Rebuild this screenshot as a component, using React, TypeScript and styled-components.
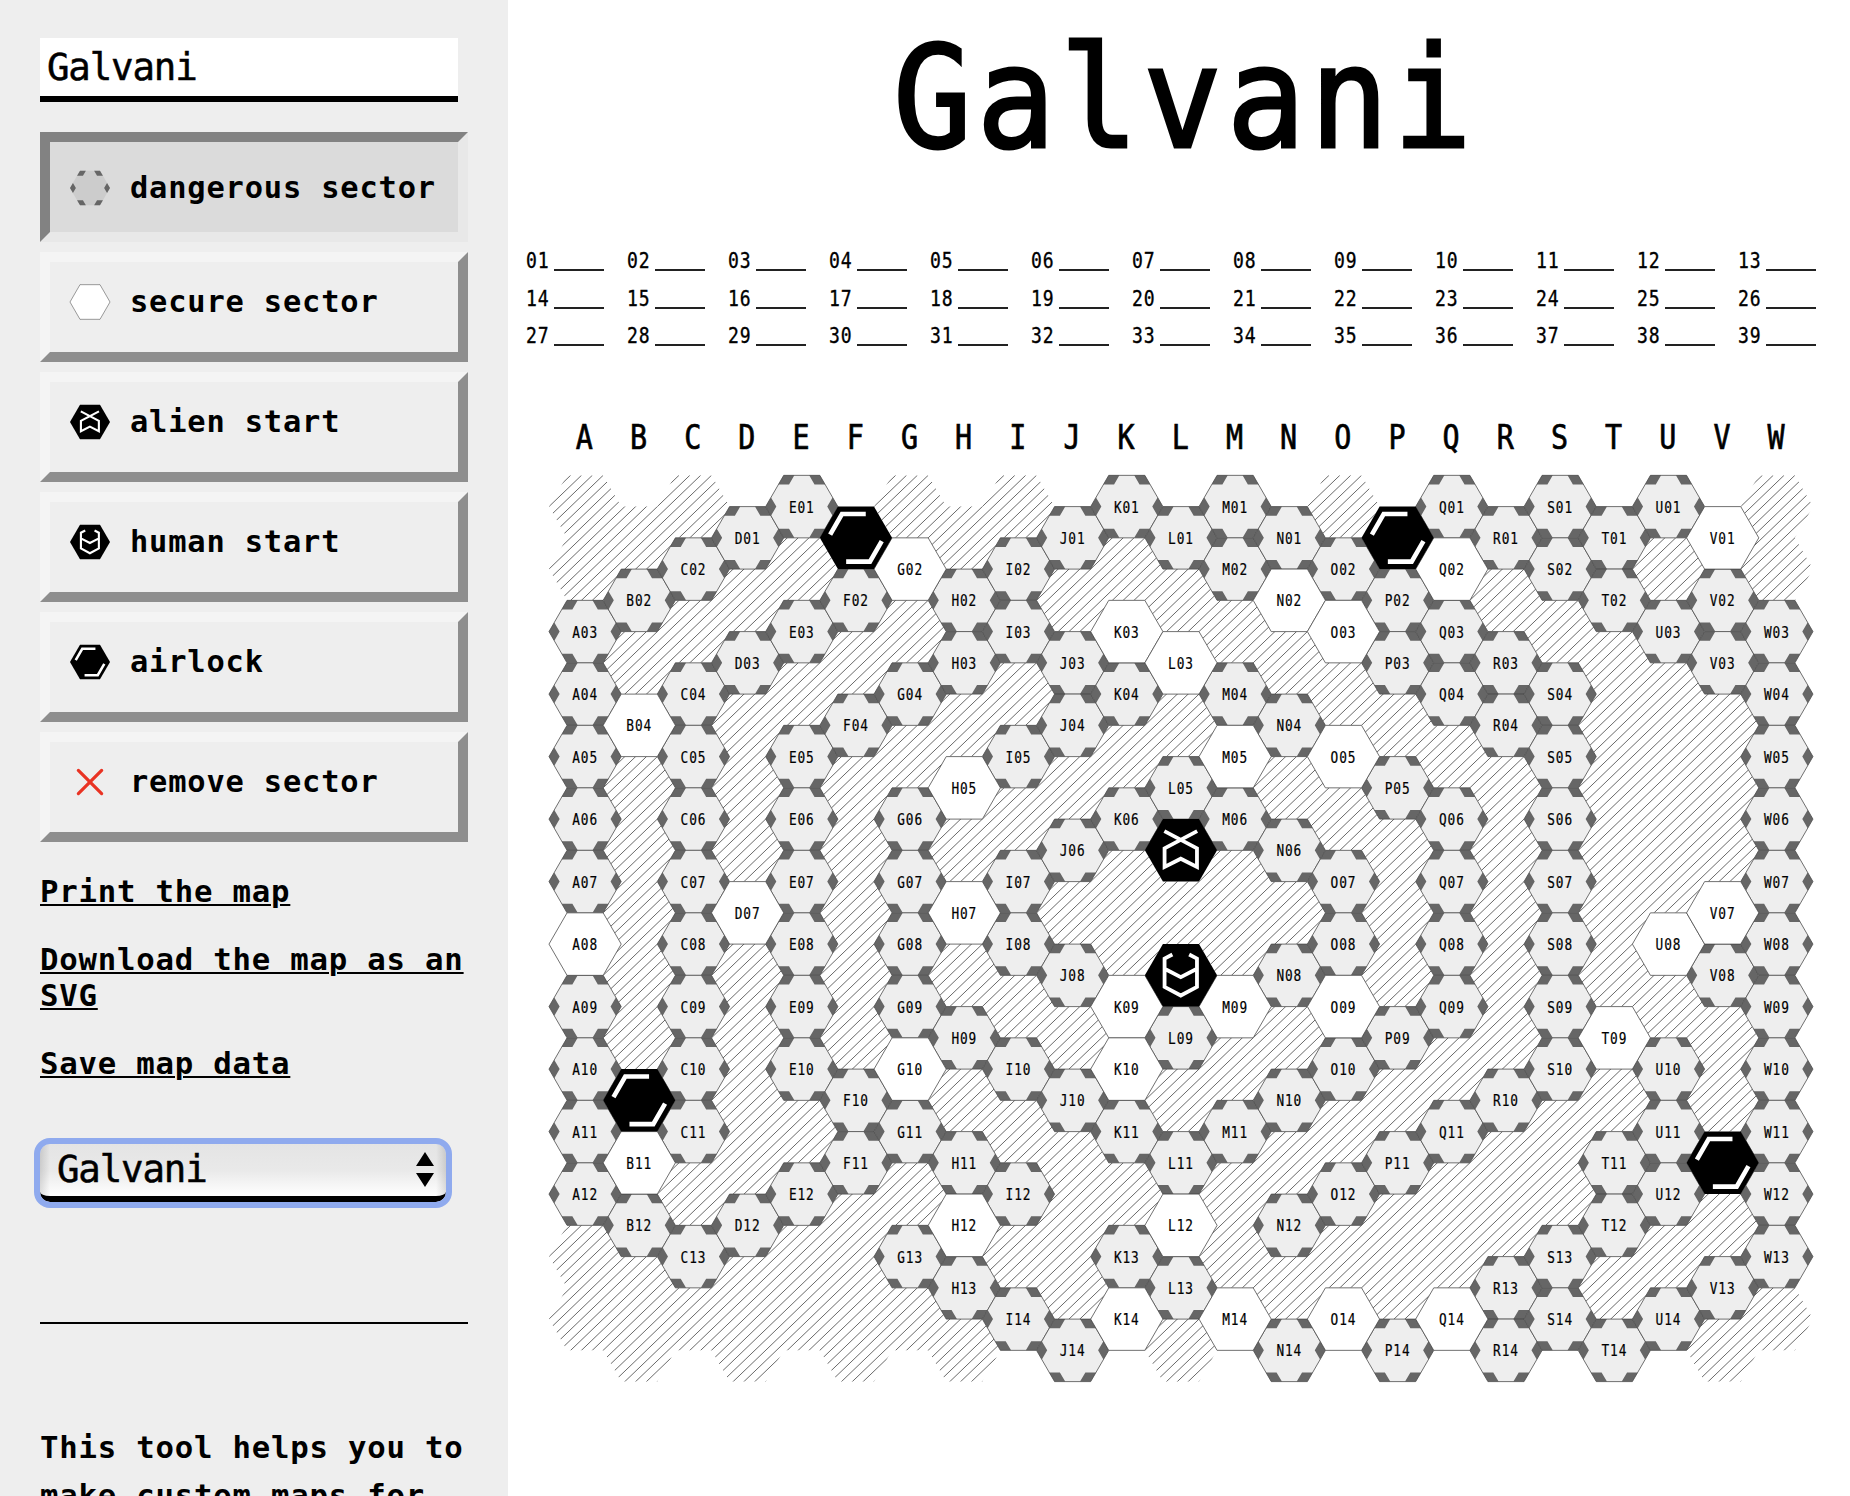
import React from "react";
import styled, { createGlobalStyle } from "styled-components";

const MONO = `"DejaVu Sans Mono", "Liberation Mono", monospace`;

const GlobalStyle = createGlobalStyle`
  body { margin: 0; background: #fff; color: #000; font-family: ${MONO}; }
  * { box-sizing: border-box; }
`;

const COL = 54.17;
const ROW = 62.5;
const R = COL / 1.5;
const H = ROW / 2;
const LETTERS = "ABCDEFGHIJKLMNOPQRSTUVW".split("");

// Rows occupied by each kind of sector, per column.
const DANGEROUS: Record<string, number[]> = {
  A: [3, 4, 5, 6, 7, 9, 10, 11, 12], B: [2, 12], C: [2, 4, 5, 6, 7, 8, 9, 10, 11, 13],
  D: [1, 3, 12], E: [1, 3, 5, 6, 7, 8, 9, 10, 12], F: [2, 4, 10, 11],
  G: [4, 6, 7, 8, 9, 11, 13], H: [2, 3, 9, 11, 13], I: [2, 3, 5, 7, 8, 10, 12, 14],
  J: [1, 3, 4, 6, 8, 10, 14], K: [1, 4, 6, 11, 13], L: [1, 5, 9, 11, 13],
  M: [1, 2, 4, 6, 11], N: [1, 4, 6, 8, 10, 12, 14], O: [2, 7, 8, 10, 12],
  P: [2, 3, 5, 9, 11, 14], Q: [1, 3, 4, 6, 7, 8, 9, 11], R: [1, 3, 4, 10, 13, 14],
  S: [1, 2, 4, 5, 6, 7, 8, 9, 10, 13, 14], T: [1, 2, 11, 12, 14], U: [1, 3, 10, 11, 12, 14],
  V: [2, 3, 8, 13], W: [3, 4, 5, 6, 7, 8, 9, 10, 11, 12, 13],
};
const SECURE: Record<string, number[]> = {
  A: [8], B: [4, 11], D: [7], G: [2, 10], H: [5, 7, 12], K: [3, 9, 10, 14], L: [3, 12],
  M: [5, 9, 14], N: [2], O: [3, 5, 9, 14], Q: [2, 14], T: [9], U: [8], V: [1, 7],
};
const SPECIAL: Record<string, Kind> = {
  F1: "airlock", P1: "airlock", B10: "airlock", V11: "airlock", L6: "alien", L8: "human",
};

type Kind = "dangerous" | "secure" | "alien" | "human" | "airlock" | "remove" | "empty";

const kindOf = (letter: string, row: number): Kind => {
  const special = SPECIAL[letter + row];
  if (special) return special;
  if (DANGEROUS[letter]?.includes(row)) return "dangerous";
  if (SECURE[letter]?.includes(row)) return "secure";
  return "empty";
};

const VERTS: [number, number][] = [[-R, 0], [-R / 2, -H], [R / 2, -H], [R, 0], [R / 2, H], [-R / 2, H]];
const HEX = VERTS.map((v) => v.join(",")).join(" ");
const SIDE = 0.295;
const CORNERS = VERTS.map((v, i) => {
  const a = VERTS[(i + 5) % 6];
  const b = VERTS[(i + 1) % 6];
  const da = [(a[0] - v[0]) * SIDE, (a[1] - v[1]) * SIDE];
  const db = [(b[0] - v[0]) * SIDE, (b[1] - v[1]) * SIDE];
  return `M${v[0]} ${v[1]}l${da[0]} ${da[1]}l${db[0]} ${db[1]}l${-da[0]} ${-da[1]}z`;
}).join("");

// Diagonal hatching over the whole board, five lines per column step.
const HATCH = Array.from({ length: 205 }, (_, k) => {
  const x = 41 + (k * COL) / 5;
  const rows = 90;
  return `M${x} 75.3L${x - (rows * COL) / 5} ${75.3 + (rows * ROW) / 6}`;
}).join("");

const Hexagon = ({ kind, fill = "#eee", edge = 0.8 }: { kind: Kind; fill?: string; edge?: number }) => {
  if (kind === "remove")
    return <path d="M-21-21L21 21M21-21L-21 21" stroke="#e93323" strokeWidth={5.8} strokeLinecap="round" />;
  if (kind === "dangerous")
    return (
      <g>
        <polygon points={HEX} fill={fill} />
        <path d={CORNERS} fill="#666" />
        {edge > 0 && <polygon points={HEX} fill="none" stroke="#4c4c4c" strokeWidth={edge} />}
      </g>
    );
  if (kind === "secure")
    return <polygon points={HEX} fill="#fff" stroke="#4c4c4c" strokeWidth={edge || 1} />;
  return (
    <g>
      <polygon points={HEX} fill="#000" />
      <g fill="none" stroke="#fff" strokeWidth={3.8}>
        {kind === "alien" && <path d="M-16.6-19.2L16-2V16.6L-0.2 8.4L-16.4 16.6V-2L16.2-19.2" />}
        {kind === "human" && <path d="M-8.6-20.8L-16.4-16.8V11.6L-0.2 20.2L16 11.6V-16.8L8.2-20.8M-16.4-6.6L-0.2 1.8L16-6.6" />}
        {kind === "airlock" && <path strokeWidth={4.6} d="M-25.8-3.2L-14-23.8H9.8M25.8 3.2L14 23.8H-9.8" />}
      </g>
    </g>
  );
};

const Page = styled.div`
  display: grid;
  grid-template-columns: 508px 1fr;
  height: 1496px;
  overflow: hidden;
`;

const Sidebar = styled.aside`
  background: #eee;
  padding: 38px 38px 0 40px;
  overflow: hidden;
  font-size: 30.7px;
  font-weight: bold;
  letter-spacing: 0.78px;
`;

const NameInput = styled.input`
  display: block;
  width: 418px;
  height: 64px;
  margin: 0 0 30px;
  padding: 0 7px;
  border: 0;
  border-bottom: 6px solid #000;
  border-radius: 0;
  outline: 0;
  background: #fff;
  color: #000;
  font: 37.4px ${MONO};
  letter-spacing: -1.15px;
  -webkit-text-stroke: 0.5px #000;
`;

const Tools = styled.div`
  display: flex;
  flex-direction: column;
  gap: 10px;
  width: 428px;
`;

const ToolButton = styled.button<{ $pressed?: boolean }>`
  display: flex;
  align-items: flex-start;
  gap: 20px;
  height: 110px;
  padding: ${(p) => (p.$pressed ? "26px 0 0 20px" : "20px 0 0 20px")};
  border: 10px solid;
  border-color: ${(p) => (p.$pressed ? "#828282 #e8e8e8 #e8e8e8 #828282" : "#f4f4f4 #8e8e8e #8e8e8e #f4f4f4")};
  background: ${(p) => (p.$pressed ? "#dbdbdb" : "#eee")};
  color: #000;
  font: bold 30.4px/40px ${MONO};
  letter-spacing: 0.82px;
  white-space: nowrap;
`;

const ToolIcon = styled.svg`
  flex: none;
  width: 42px;
  height: 40px;
  margin: 0 -1px;
`;

const Links = styled.nav`
  display: flex;
  flex-direction: column;
  gap: 32px;
  margin-top: 32px;
  width: 430px;
`;

const MapLink = styled.a`
  color: #000;
  line-height: 36px;
  text-decoration: underline;
  text-decoration-thickness: 2px;
  text-underline-offset: 2px;
`;

const Picker = styled.div`
  display: flex;
  align-items: center;
  justify-content: space-between;
  width: 406px;
  height: 58px;
  margin-top: 62px;
  padding: 0 12px 2px 17px;
  border-bottom: 6px solid #000;
  border-radius: 10px;
  outline: 6px solid #8faaee;
  background:
    linear-gradient(90deg, rgba(0, 0, 0, 0.12), transparent 10px, transparent calc(100% - 10px), rgba(0, 0, 0, 0.12)),
    linear-gradient(#e4e4e4, #e9e9e9 50%, #fff);
  font-size: 37.4px;
  font-weight: normal;
  letter-spacing: -1.15px;
  -webkit-text-stroke: 0.5px #000;
`;

const Arrows = styled.svg`
  width: 18px;
  height: 36px;
  margin-top: 1px;
`;

const Divider = styled.hr`
  width: 428px;
  margin: 120px 0 100px;
  border: 0;
  border-top: 2px solid #000;
`;

const Intro = styled.p`
  margin: 0;
  width: 440px;
  line-height: 48px;
  white-space: pre-line;
`;

const Sheet = styled.main`
  display: flex;
  flex-direction: column;
  overflow: hidden;
`;

const Title = styled.h1`
  margin: 23px 0 0 12px;
  height: 219px;
  text-align: center;
  font: 141px/150px ${MONO};
  letter-spacing: 5.2px;
  transform: scaleX(0.925);
  -webkit-text-stroke: 3px #000;
`;

const Turns = styled.ol`
  display: grid;
  grid-template-columns: repeat(13, 101.03px);
  grid-auto-rows: 37.6px;
  margin: 1px 0 0;
  padding: 0 0 0 18px;
  list-style: none;
`;

const Turn = styled.li`
  display: flex;
  font-size: 21px;
  line-height: 36.6px;
`;

const TurnNumber = styled.span`
  width: 28px;
  letter-spacing: 0.9px;
  transform: scaleX(0.86);
  transform-origin: 0 50%;
  -webkit-text-stroke: 0.35px #000;
`;

const Blank = styled.span`
  width: 50px;
  height: 28px;
  border-bottom: 2px solid #222;
`;

const MapSvg = styled.svg`
  display: block;
  flex: none;
  width: 1342px;
  height: 1020px;
  margin-top: 44.3px;
  font-family: ${MONO};
  text-anchor: middle;
`;

const TOOLS: { kind: Kind; label: string }[] = [
  { kind: "dangerous", label: "dangerous sector" },
  { kind: "secure", label: "secure sector" },
  { kind: "alien", label: "alien start" },
  { kind: "human", label: "human start" },
  { kind: "airlock", label: "airlock" },
  { kind: "remove", label: "remove sector" },
];

const pad = (n: number) => String(n).padStart(2, "0");

const SECTORS = LETTERS.flatMap((letter, c) =>
  Array.from({ length: 14 }, (_, r) => ({
    id: letter + pad(r + 1),
    kind: kindOf(letter, r + 1),
    x: 77.1 + c * COL,
    y: 106.6 + r * ROW + (c % 2 ? H : 0),
  }))
);
const LAYERS: Kind[][] = [["dangerous"], ["secure"], ["alien", "human", "airlock"]];

const SectorMap = () => (
  <MapSvg viewBox="0 0 1342 1020">
    <defs>
      <clipPath id="void">
        <path
          d={SECTORS.filter((s) => s.kind === "empty")
            .map((s) => "M" + VERTS.map(([x, y]) => `${s.x + x} ${s.y + y}`).join("L") + "z")
            .join("")}
        />
      </clipPath>
    </defs>
    {LETTERS.map((l, i) => (
      <text
        key={l}
        transform={`translate(${76.4 + i * COL} 49) scale(.86 1)`}
        fontSize={33}
        stroke="#000"
        strokeWidth={0.7}
      >
        {l}
      </text>
    ))}
    <path d={HATCH} clipPath="url(#void)" fill="none" stroke="#444" strokeWidth={0.8} />
    {LAYERS.map((kinds, i) => (
      <g key={i}>
        {SECTORS.filter((s) => kinds.includes(s.kind)).map((s) => (
          <g key={s.id} transform={`translate(${s.x} ${s.y})`}>
            <Hexagon kind={s.kind} />
          </g>
        ))}
      </g>
    ))}
    {SECTORS.filter((s) => s.kind === "dangerous" || s.kind === "secure").map((s) => (
      <text
        key={s.id}
        transform={`translate(${s.x} ${s.y + 6}) scale(.83 1)`}
        fontSize={15.4}
        letterSpacing={1.1}
        stroke="#000"
        strokeWidth={0.2}
      >
        {s.id}
      </text>
    ))}
  </MapSvg>
);

export default function App() {
  return (
    <Page>
      <GlobalStyle />
      <Sidebar>
        <NameInput defaultValue="Galvani" spellCheck={false} />
        <Tools>
          {TOOLS.map((t) => (
            <ToolButton key={t.kind} $pressed={t.kind === "dangerous"}>
              <ToolIcon viewBox="-37.9 -36 75.8 72">
                <Hexagon kind={t.kind} fill="#ccc" edge={t.kind === "dangerous" ? 0 : 1} />
              </ToolIcon>
              {t.label}
            </ToolButton>
          ))}
        </Tools>
        <Links>
          <MapLink>Print the map</MapLink>
          <MapLink>Download the map as an SVG</MapLink>
          <MapLink>Save map data</MapLink>
        </Links>
        <Picker>
          Galvani
          <Arrows viewBox="0 0 18 36">
            <path d="M9 0L18 14H0zM0 21H18L9 35z" />
          </Arrows>
        </Picker>
        <Divider />
        <Intro>{"This tool helps you to\nmake custom maps for"}</Intro>
      </Sidebar>
      <Sheet>
        <Title>Galvani</Title>
        <Turns>
          {Array.from({ length: 39 }, (_, i) => (
            <Turn key={i}>
              <TurnNumber>{pad(i + 1)}</TurnNumber>
              <Blank />
            </Turn>
          ))}
        </Turns>
        <SectorMap />
      </Sheet>
    </Page>
  );
}
